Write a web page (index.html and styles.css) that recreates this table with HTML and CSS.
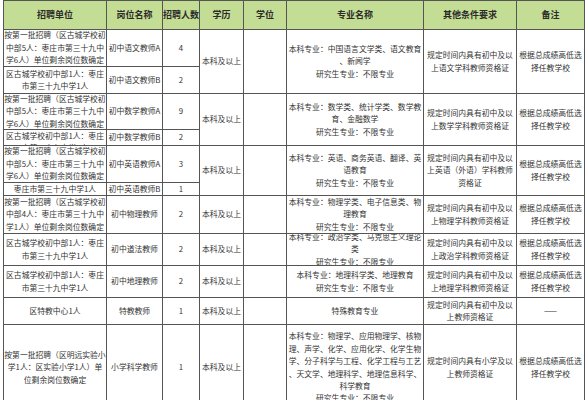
FILE: index.html
```html
<!DOCTYPE html>
<html lang="zh-CN">
<head>
<meta charset="utf-8">
<title>招聘岗位表</title>
<link rel="stylesheet" href="styles.css">
</head>
<body>
<div class="sheet">
  <div class="cell head">招聘单位</div>
  <div class="cell head">岗位名称</div>
  <div class="cell head">招聘人数</div>
  <div class="cell head">学历</div>
  <div class="cell head">学位</div>
  <div class="cell head">专业名称</div>
  <div class="cell head">其他条件要求</div>
  <div class="cell head">备注</div>

  <div class="cell">按第一批招聘（区古城学校初中部5人：枣庄市第三十九中学6人）单位剩余岗位数确定</div>
  <div class="cell">初中语文教师A</div>
  <div class="cell">4</div>
  <div class="cell span2">本科及以上</div>
  <div class="cell span2"></div>
  <div class="cell span2"><p>本科专业：中国语言文学类、语文教育、新闻学</p><p>研究生专业：不限专业</p></div>
  <div class="cell span2">规定时间内具有初中及以上语文学科教师资格证</div>
  <div class="cell span2">根据总成绩高低选择任教学校</div>
  <div class="cell">区古城学校初中部1人：枣庄市第三十九中学1人</div>
  <div class="cell">初中语文教师B</div>
  <div class="cell">2</div>

  <div class="cell">按第一批招聘（区古城学校初中部5人：枣庄市第三十九中学6人）单位剩余岗位数确定</div>
  <div class="cell">初中数学教师A</div>
  <div class="cell">9</div>
  <div class="cell span2">本科及以上</div>
  <div class="cell span2"></div>
  <div class="cell span2"><p>本科专业：数学类、统计学类、数学教育、金融数学</p><p>研究生专业：不限专业</p></div>
  <div class="cell span2">规定时间内具有初中及以上数学学科教师资格证</div>
  <div class="cell span2">根据总成绩高低选择任教学校</div>
  <div class="cell top">区古城学校初中部1人：枣庄市第三十九中学1人</div>
  <div class="cell">初中数学教师B</div>
  <div class="cell">2</div>

  <div class="cell">按第一批招聘（区古城学校初中部5人：枣庄市第三十九中学6人）单位剩余岗位数确定</div>
  <div class="cell">初中英语教师A</div>
  <div class="cell">3</div>
  <div class="cell span2">本科及以上</div>
  <div class="cell span2"></div>
  <div class="cell span2"><p>本科专业：英语、商务英语、翻译、英语教育</p><p>研究生专业：不限专业</p></div>
  <div class="cell span2">规定时间内具有初中及以上英语（外语）学科教师资格证</div>
  <div class="cell span2">根据总成绩高低选择任教学校</div>
  <div class="cell">枣庄市第三十九中学1人</div>
  <div class="cell">初中英语教师B</div>
  <div class="cell">1</div>

  <div class="cell">按第一批招聘（区古城学校初中部4人：枣庄市第三十九中学1人）单位剩余岗位数确定</div>
  <div class="cell">初中物理教师</div>
  <div class="cell">2</div>
  <div class="cell">本科及以上</div>
  <div class="cell"></div>
  <div class="cell"><p>本科专业：物理学类、电子信息类、物理教育</p><p>研究生专业：不限专业</p></div>
  <div class="cell">规定时间内具有初中及以上物理学科教师资格证</div>
  <div class="cell">根据总成绩高低选择任教学校</div>

  <div class="cell">区古城学校初中部1人：枣庄市第三十九中学1人</div>
  <div class="cell">初中道法教师</div>
  <div class="cell">2</div>
  <div class="cell">本科及以上</div>
  <div class="cell"></div>
  <div class="cell"><p>本科专业：政治学类、马克思主义理论类</p><p>研究生专业：不限专业</p></div>
  <div class="cell">规定时间内具有初中及以上政治学科教师资格证</div>
  <div class="cell">根据总成绩高低选择任教学校</div>

  <div class="cell">区古城学校初中部1人：枣庄市第三十九中学1人</div>
  <div class="cell">初中地理教师</div>
  <div class="cell">2</div>
  <div class="cell">本科及以上</div>
  <div class="cell"></div>
  <div class="cell"><p>本科专业：地理科学类、地理教育</p><p>研究生专业：不限专业</p></div>
  <div class="cell">规定时间内具有初中及以上地理学科教师资格证</div>
  <div class="cell">根据总成绩高低选择任教学校</div>

  <div class="cell">区特教中心1人</div>
  <div class="cell">特教教师</div>
  <div class="cell">1</div>
  <div class="cell">本科及以上</div>
  <div class="cell"></div>
  <div class="cell">特殊教育专业</div>
  <div class="cell">规定时间内具有初中及以上教师资格证</div>
  <div class="cell">——</div>

  <div class="cell">按第一批招聘（区明远实验小学1人：区实验小学1人）单位剩余岗位数确定</div>
  <div class="cell">小学科学教师</div>
  <div class="cell">1</div>
  <div class="cell">本科及以上</div>
  <div class="cell"></div>
  <div class="cell"><p>本科专业：物理学、应用物理学、核物理、声学、化学、应用化学、化学生物学、分子科学与工程、化学工程与工艺、天文学、地理科学、地理信息科学、科学教育</p><p>研究生专业：不限专业</p></div>
  <div class="cell">规定时间内具有小学及以上教师资格证</div>
  <div class="cell">根据总成绩高低选择任教学校</div>
</div>
</body>
</html>
```

FILE: styles.css
```css
html, body {
  margin: 0;
  padding: 0;
  background: #ffffff;
}

body {
  font-family: "Noto Sans CJK SC", "Noto Sans", sans-serif;
  color: #333333;
}

.sheet {
  margin-left: 3px;
  width: 580px;
  display: grid;
  grid-template-columns: 102px 55px 36px 43px 42px 136px 92px 67px;
  grid-template-rows: 28px 36px 26px 35px 15px 36px 12px 37px 31px 31px 26px 85px;
  gap: 1px;
  padding: 1px;
  background: #555555;
}

.cell {
  background: #ffffff;
  display: flex;
  flex-direction: column;
  justify-content: center;
  text-align: center;
  overflow: hidden;
  font-size: 7.8px;
  line-height: 12.4px;
  line-break: anywhere;
}

.cell p {
  margin: 0;
}

.head {
  background: #c4dd95;
  font-size: 9px;
  font-weight: bold;
  color: #2b2b2b;
}

.span2 {
  grid-row: span 2;
}

.top {
  justify-content: flex-start;
}
```
